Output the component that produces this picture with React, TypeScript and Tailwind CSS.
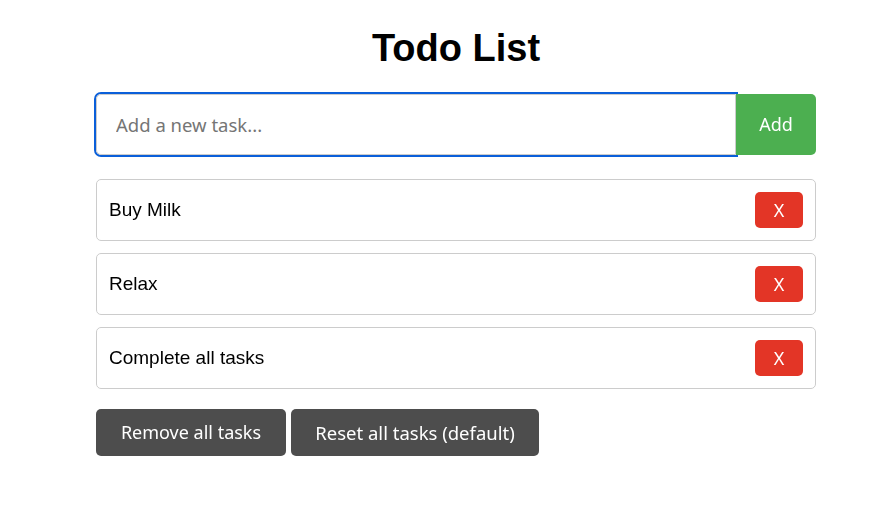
import { useState } from "react";

const defaults = ["Buy Milk", "Relax", "Complete all tasks"];

export default function App() {
  const [tasks, setTasks] = useState<string[]>(defaults);
  const [text, setText] = useState("");

  const add = () => {
    if (!text.trim()) return;
    setTasks([...tasks, text.trim()]);
    setText("");
  };

  return (
    <div className="min-h-screen bg-white pt-[27px] font-['Liberation_Sans',Arial,sans-serif]">
      <div className="ml-[96px] w-[720px]">
        <h1 className="text-center text-[38px] font-bold leading-[42px] text-black">Todo List</h1>

        <div className="mt-[25px] flex h-[61px]">
          <input
            autoFocus
            value={text}
            onChange={(e) => setText(e.target.value)}
            onKeyDown={(e) => e.key === "Enter" && add()}
            placeholder="Add a new task..."
            className="h-full flex-1 rounded-l-[5px] border border-[#ccc] px-[19px] text-[18.5px] font-['Noto_Sans',sans-serif] text-black outline-none ring-2 ring-[#0a5fd9] placeholder:text-[#757575]"
          />
          <button
            onClick={add}
            className="h-full w-[80px] rounded-r-[5px] bg-[#4caf50] text-[18px] font-['Noto_Sans',sans-serif] text-white"
          >
            Add
          </button>
        </div>

        <ul className="mt-[24px] flex flex-col gap-[12px]">
          {tasks.map((t, i) => (
            <li
              key={i}
              className="flex h-[62px] items-center justify-between rounded-[5px] border border-[#ccc] px-[12px] text-[19px] text-black"
            >
              <span>{t}</span>
              <button
                onClick={() => setTasks(tasks.filter((_, j) => j !== i))}
                className="h-[36px] w-[48px] rounded-[5px] bg-[#e33526] text-[18px] font-['Noto_Sans',sans-serif] text-white"
              >
                X
              </button>
            </li>
          ))}
        </ul>

        <div className="mt-[20px] flex gap-[5px]">
          <button
            onClick={() => setTasks([])}
            className="h-[47px] w-[190px] rounded-[5px] bg-[#4d4d4d] text-[18px] font-['Noto_Sans',sans-serif] text-white"
          >
            Remove all tasks
          </button>
          <button
            onClick={() => setTasks(defaults)}
            className="h-[47px] w-[248px] rounded-[5px] bg-[#4d4d4d] text-[18.5px] font-['Noto_Sans',sans-serif] text-white"
          >
            Reset all tasks (default)
          </button>
        </div>
      </div>
    </div>
  );
}
